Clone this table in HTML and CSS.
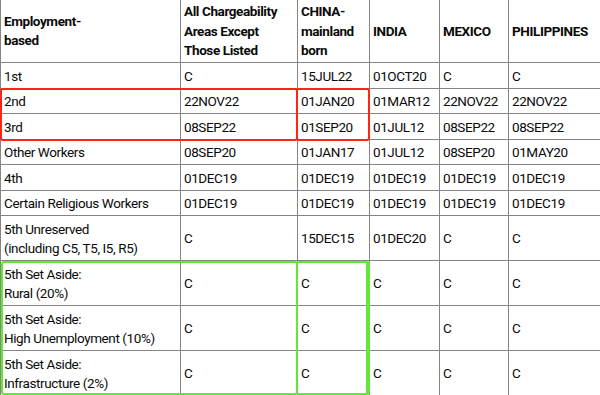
FILE: index.html
```html
<!DOCTYPE html>
<html lang="en">
<head>
<meta charset="utf-8">
<title>Visa Bulletin – Employment-based</title>
<link rel="stylesheet" href="styles.css">
</head>
<body>
<div class="frame">
  <table class="bulletin">
    <colgroup>
      <col class="col-cat">
      <col class="col-all">
      <col class="col-china">
      <col class="col-india">
      <col class="col-mexico">
      <col class="col-phil">
    </colgroup>
    <thead>
      <tr>
        <th>Employment-<br>based</th>
        <th>All Chargeability<br>Areas Except<br>Those Listed</th>
        <th>CHINA-<br>mainland<br>born</th>
        <th>INDIA</th>
        <th>MEXICO</th>
        <th>PHILIPPINES</th>
      </tr>
    </thead>
    <tbody>
      <tr><td>1st</td><td>C</td><td>15JUL22</td><td>01OCT20</td><td>C</td><td>C</td></tr>
      <tr><td>2nd</td><td>22NOV22</td><td>01JAN20</td><td>01MAR12</td><td>22NOV22</td><td>22NOV22</td></tr>
      <tr><td>3rd</td><td>08SEP22</td><td>01SEP20</td><td>01JUL12</td><td>08SEP22</td><td>08SEP22</td></tr>
      <tr><td>Other Workers</td><td>08SEP20</td><td>01JAN17</td><td>01JUL12</td><td>08SEP20</td><td>01MAY20</td></tr>
      <tr><td>4th</td><td>01DEC19</td><td>01DEC19</td><td>01DEC19</td><td>01DEC19</td><td>01DEC19</td></tr>
      <tr><td>Certain Religious Workers</td><td>01DEC19</td><td>01DEC19</td><td>01DEC19</td><td>01DEC19</td><td>01DEC19</td></tr>
      <tr><td>5th Unreserved<br>(including C5, T5, I5, R5)</td><td>C</td><td>15DEC15</td><td>01DEC20</td><td>C</td><td>C</td></tr>
      <tr><td>5th Set Aside:<br>Rural (20%)</td><td>C</td><td>C</td><td>C</td><td>C</td><td>C</td></tr>
      <tr><td>5th Set Aside:<br>High Unemployment (10%)</td><td>C</td><td>C</td><td>C</td><td>C</td><td>C</td></tr>
      <tr><td>5th Set Aside:<br>Infrastructure (2%)</td><td>C</td><td>C</td><td>C</td><td>C</td><td>C</td></tr>
    </tbody>
  </table>
  <div class="mark mark-red mark-red-left"></div>
  <div class="mark mark-red mark-red-china"></div>
  <div class="mark mark-green mark-green-left"></div>
  <div class="mark mark-green mark-green-china"></div>
</div>
</body>
</html>
```
FILE: styles.css
```css
html, body {
  margin: 0;
  padding: 0;
  background: #ffffff;
}

body {
  width: 600px;
  height: 395px;
  overflow: hidden;
  font-family: Roboto, "Liberation Sans", sans-serif;
  color: #0a0a0a;
}

.frame {
  position: relative;
  width: 600px;
  height: 395px;
  overflow: hidden;
}

.bulletin {
  border-collapse: collapse;
  table-layout: fixed;
  width: 650px;
  margin-top: -2.5px;
  font-size: 13.5px;
  line-height: 19.5px;
  letter-spacing: -0.4px;
}

.col-cat { width: 180px; }
.col-all { width: 117px; }
.col-china { width: 72px; }
.col-india { width: 70px; }
.col-mexico { width: 69px; }
.col-phil { width: 142px; }

.bulletin th,
.bulletin td {
  border: 1px solid #858585;
  padding: 3.5px 2px 1.5px 3px;
  text-align: left;
  vertical-align: middle;
  white-space: nowrap;
}

.bulletin th {
  font-weight: 700;
}

.mark {
  position: absolute;
  box-sizing: border-box;
  border-radius: 3px;
}

.mark-red {
  border: 2.5px solid #ff2414;
  top: 88px;
  height: 53px;
}

.mark-red-left {
  left: 0;
  width: 298px;
}

.mark-red-china {
  left: 296px;
  width: 74px;
}

.mark-green {
  border: 2.5px solid #63e63a;
  top: 261px;
  height: 134px;
}

.mark-green-left {
  left: 1px;
  width: 297px;
}

.mark-green-china {
  left: 296px;
  width: 74px;
  border-right-width: 4px;
}
```
